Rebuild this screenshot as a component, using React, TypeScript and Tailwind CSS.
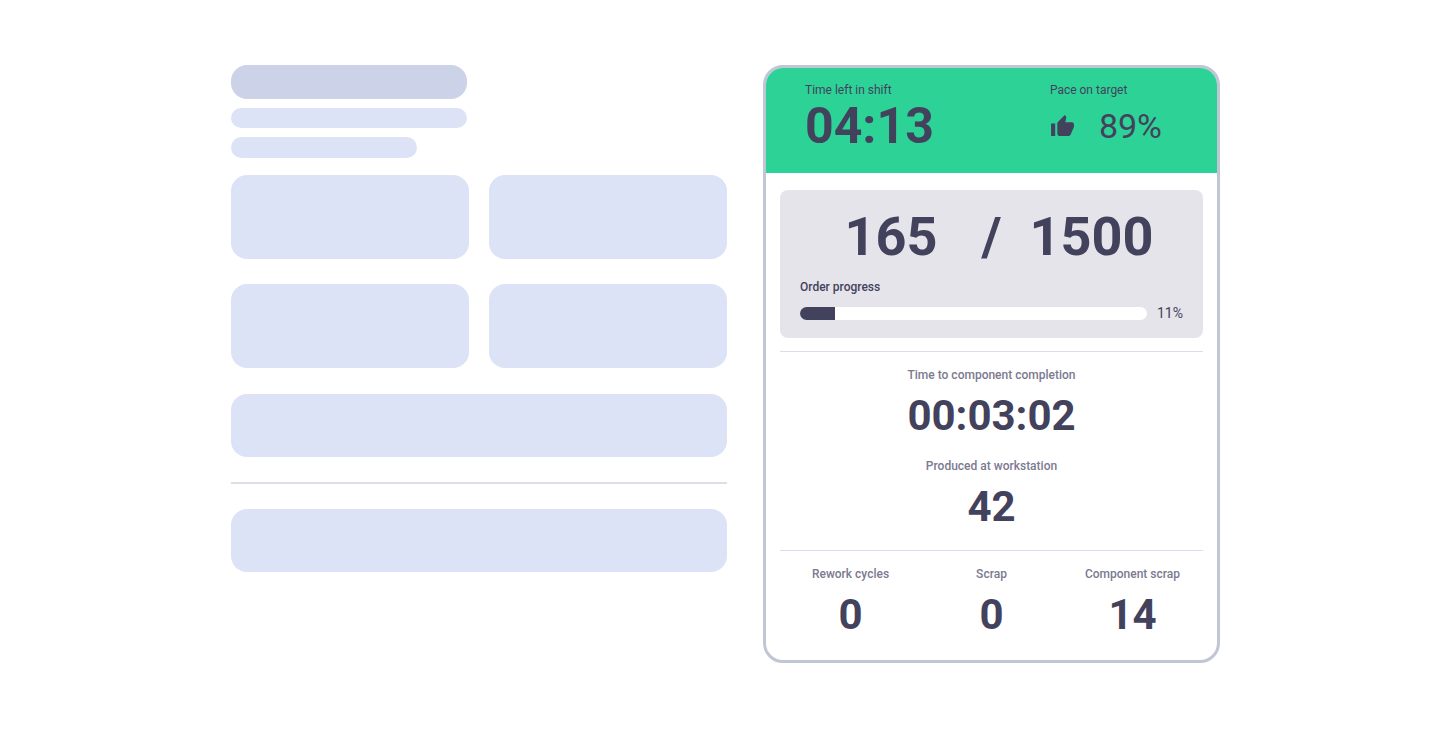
import { MdThumbUp } from "react-icons/md";

type StatProps = {
  label: string;
  value: string;
};

const Stat: React.FC<StatProps> = ({ label, value }) => {
  return (
    <div className="flex flex-col items-center gap-[9px]">
      <h3 className="text-xs font-medium text-[#7b7a90] whitespace-nowrap">
        {label}
      </h3>
      <p className="text-[42px] leading-12 font-bold">{value}</p>
    </div>
  );
};

const Placeholder = () => {
  return (
    <div className="flex flex-col" aria-hidden="true">
      <div className="h-[34px] w-[47.5%] rounded-2xl bg-[#ccd2e8]"></div>
      <div className="mt-[9px] h-5 w-[47.5%] rounded-full bg-[#dde3f7]"></div>
      <div className="mt-[9px] h-[21px] w-[37.5%] rounded-full bg-[#dde3f7]"></div>
      <div className="mt-[17px] grid grid-cols-2 gap-x-5 gap-y-[25px]">
        {[1, 2, 3, 4].map((item) => (
          <div key={item} className="h-21 rounded-2xl bg-[#dde3f7]"></div>
        ))}
      </div>
      <div className="mt-[26px] h-[63px] rounded-2xl bg-[#dde3f7]"></div>
      <div className="mt-[25px] h-0.5 bg-[#dcdee8]"></div>
      <div className="mt-[25px] h-[63px] rounded-2xl bg-[#dde3f7]"></div>
    </div>
  );
};

const ShiftHeader = () => {
  return (
    <header className="flex justify-between bg-[#2dd297] pt-3.5 pr-[55px] pb-[19px] pl-[39px]">
      <div>
        <h2 className="text-xs">Time left in shift</h2>
        <p className="text-[50px] leading-14 font-bold">04:13</p>
      </div>
      <div>
        <h2 className="text-xs">Pace on target</h2>
        <div className="flex h-14 items-center justify-between gap-6">
          <MdThumbUp className="size-[25px]" />
          <p className="text-[34px]">89%</p>
        </div>
      </div>
    </header>
  );
};

const OrderProgress = () => {
  return (
    <section className="rounded-lg bg-[#e5e4ea] px-5 pt-[19px] pb-[15px]">
      <div className="grid grid-cols-[1fr_auto_1fr] text-[54px] leading-14 font-bold">
        <p className="pr-11 text-right">165</p>
        <p>/</p>
        <p className="pl-7">1500</p>
      </div>
      <h2 id="order-progress" className="mt-3.5 text-xs font-medium">
        Order progress
      </h2>
      <div className="mt-2 flex items-center gap-2.5">
        <div
          role="progressbar"
          aria-labelledby="order-progress"
          aria-valuenow={11}
          className="h-[13px] flex-1 overflow-hidden rounded-full bg-white"
        >
          <div className="h-full w-[10%] bg-[#43425d]"></div>
        </div>
        <p className="text-sm">11%</p>
      </div>
    </section>
  );
};

const App = () => {
  return (
    <main className="mx-auto grid w-full max-w-[989px] grid-cols-[496fr_457fr] items-start gap-9 py-[65px] font-[Roboto,sans-serif] text-[#43425d]">
      <Placeholder />
      <div className="overflow-hidden rounded-[20px] border-3 border-[#c1c6d6] bg-white">
        <ShiftHeader />
        <div className="px-3.5 pt-[17px] pb-[21px]">
          <OrderProgress />
          <section className="mt-[13px] flex flex-col gap-[18px] border-t border-[#dddcea] pt-[15px]">
            <Stat label="Time to component completion" value="00:03:02" />
            <Stat label="Produced at workstation" value="42" />
          </section>
          <section className="mt-[19px] grid grid-cols-3 border-t border-[#dddcea] pt-[15px]">
            <Stat label="Rework cycles" value="0" />
            <Stat label="Scrap" value="0" />
            <Stat label="Component scrap" value="14" />
          </section>
        </div>
      </div>
    </main>
  );
};

export default App;
